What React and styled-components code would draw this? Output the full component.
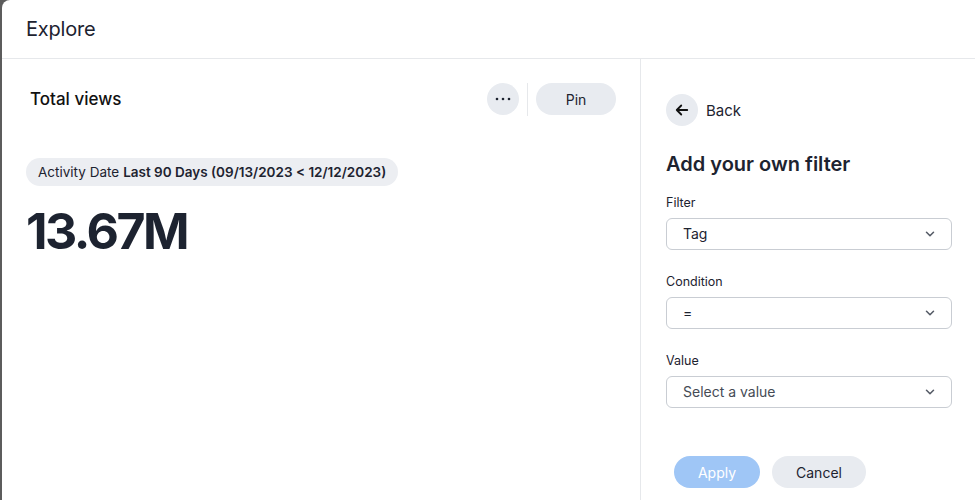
import React, { useState } from 'react';
import styled, { createGlobalStyle } from 'styled-components';

const GlobalStyle = createGlobalStyle`
  html, body {
    margin: 0;
    padding: 0;
    background: #5c5c5c;
  }
  body {
    font-family: Inter, "Noto Sans", "Liberation Sans", sans-serif;
    color: #1d2330;
  }
`;

const Modal = styled.div`
  margin-left: 2px;
  width: 973px;
  height: 500px;
  background: #fff;
  border-top-left-radius: 8px;
  display: flex;
  flex-direction: column;
  overflow: hidden;
`;

const Header = styled.header`
  height: 58px;
  display: flex;
  align-items: center;
  padding-left: 24px;
  border-bottom: 1px solid #e6e8eb;
  flex-shrink: 0;
`;

const Title = styled.h1`
  margin: 0;
  font-size: 20px;
  font-weight: 400;
  letter-spacing: -0.2px;
  color: #1d2330;
`;

const Body = styled.div`
  flex: 1;
  display: flex;
`;

const LeftPane = styled.section`
  width: 639px;
  border-right: 1px solid #e6e8eb;
  padding: 24px 24px 0 24px;
  box-sizing: border-box;
`;

const CardHead = styled.div`
  display: flex;
  align-items: center;
  justify-content: space-between;
  height: 32px;
  padding-left: 4px;
`;

const CardTitle = styled.h2`
  margin: 0;
  font-size: 17px;
  font-weight: 500;
  color: #111;
`;

const Actions = styled.div`
  display: flex;
  align-items: center;
`;

const IconButton = styled.button`
  width: 32px;
  height: 32px;
  border-radius: 50%;
  border: none;
  background: #e8ebf0;
  display: flex;
  align-items: center;
  justify-content: center;
  padding: 0;
  cursor: pointer;
  color: #1d2330;
`;

const Divider = styled.span`
  width: 1px;
  height: 33px;
  background: #e6e8eb;
  margin: 0 8px 0 8px;
`;

const PillButton = styled.button`
  height: 32px;
  min-width: ${(p) => p.$w || 80}px;
  padding: 0 18px;
  border-radius: 16px;
  border: none;
  font-family: inherit;
  font-size: 14px;
  background: ${(p) => (p.$primary ? '#9fc6f6' : '#e8ebf0')};
  color: ${(p) => (p.$primary ? '#fff' : '#1d2330')};
  cursor: pointer;
`;

const Chip = styled.div`
  display: inline-flex;
  align-items: center;
  height: 28px;
  margin-top: 43px;
  padding: 0 12px;
  border-radius: 14px;
  background: #eceef2;
  font-size: 13.5px;
  color: #1d2330;
  gap: 4px;

  b {
    font-weight: 600;
  }
`;

const BigNumber = styled.div`
  margin-top: 13px;
  font-size: 50px;
  font-weight: 700;
  letter-spacing: -2.5px;
  line-height: 64px;
  color: #1d2330;
`;

const RightPane = styled.aside`
  flex: 1;
  padding: 35px 23px 0 25px;
  display: flex;
  flex-direction: column;
`;

const BackRow = styled.button`
  display: flex;
  align-items: center;
  gap: 8px;
  border: none;
  background: none;
  padding: 0;
  font-family: inherit;
  font-size: 15px;
  color: #1d2330;
  cursor: pointer;
  align-self: flex-start;
`;

const Heading = styled.h3`
  margin: 26px 0 0;
  font-size: 20px;
  line-height: 24px;
  font-weight: 600;
  color: #1d2330;
`;

const Field = styled.div`
  display: flex;
  flex-direction: column;
  gap: 7px;
  margin-top: ${(p) => p.$top}px;
`;

const Label = styled.label`
  font-size: 12.5px;
  line-height: 16px;
  color: #1d2330;
`;

const Select = styled.div`
  box-sizing: border-box;
  height: 32px;
  border: 1px solid #c9cdd3;
  border-radius: 6px;
  display: flex;
  align-items: center;
  justify-content: space-between;
  padding: 0 14px 1px 16px;
  font-size: 14px;
  color: ${(p) => (p.$muted ? '#454b55' : '#1d2330')};
`;

const Footer = styled.div`
  display: flex;
  gap: 12px;
  margin-top: 48px;
  padding-left: 8px;
`;

const Chevron = () => (
  <svg width="14" height="14" viewBox="0 0 24 24" fill="none" stroke="#555b66" strokeWidth="2.6" strokeLinecap="round" strokeLinejoin="round">
    <path d="M6 9l6 6 6-6" />
  </svg>
);

function FilterSelect({ label, value, top, muted }) {
  return (
    <Field $top={top}>
      <Label>{label}</Label>
      <Select $muted={muted}>
        <span>{value}</span>
        <Chevron />
      </Select>
    </Field>
  );
}

export default function App() {
  const [filter] = useState('Tag');

  return (
    <>
      <GlobalStyle />
      <Modal>
        <Header>
          <Title>Explore</Title>
        </Header>
        <Body>
          <LeftPane>
            <CardHead>
              <CardTitle>Total views</CardTitle>
              <Actions>
                <IconButton aria-label="More">
                  <svg width="16" height="4" viewBox="0 0 16 4" fill="#1d2330">
                    <circle cx="2" cy="2" r="1.3" />
                    <circle cx="8" cy="2" r="1.3" />
                    <circle cx="14" cy="2" r="1.3" />
                  </svg>
                </IconButton>
                <Divider />
                <PillButton>Pin</PillButton>
              </Actions>
            </CardHead>
            <Chip>
              Activity Date <b>Last 90 Days (09/13/2023 &lt; 12/12/2023)</b>
            </Chip>
            <BigNumber>13.67M</BigNumber>
          </LeftPane>
          <RightPane>
            <BackRow>
              <IconButton as="span">
                <svg width="18" height="18" viewBox="0 0 24 24" fill="none" stroke="#111" strokeWidth="2.4" strokeLinecap="round" strokeLinejoin="round">
                  <path d="M19 12H5M11 6l-6 6 6 6" />
                </svg>
              </IconButton>
              Back
            </BackRow>
            <Heading>Add your own filter</Heading>
            <FilterSelect label="Filter" value={filter} top={19} />
            <FilterSelect label="Condition" value="=" top={24} />
            <FilterSelect label="Value" value="Select a value" top={24} muted />
            <Footer>
              <PillButton $primary $w={86}>Apply</PillButton>
              <PillButton $w={94}>Cancel</PillButton>
            </Footer>
          </RightPane>
        </Body>
      </Modal>
    </>
  );
}
